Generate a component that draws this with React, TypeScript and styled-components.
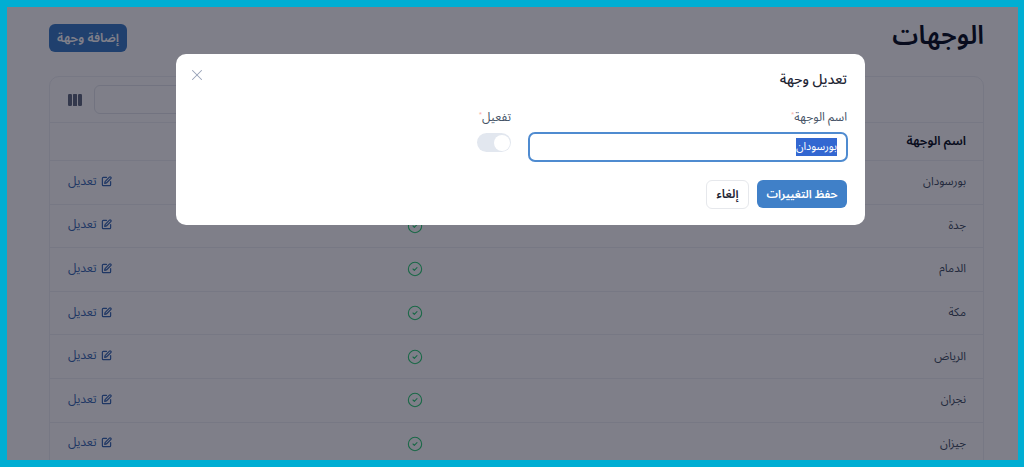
import React from "react";
import styled, { createGlobalStyle } from "styled-components";
import { X, SquarePen, CircleCheck } from "lucide-react";

const FONT = `"Noto Sans Arabic", "DejaVu Sans", "Noto Sans", sans-serif`;

const Global = createGlobalStyle`
  html, body { margin: 0; padding: 0; height: 100%; }
  body { font-family: ${FONT}; background: #fff; }
  * { box-sizing: border-box; }
`;

const Frame = styled.div`
  position: relative;
  width: 1024px;
  height: 467px;
  border: solid #00aed3;
  border-width: 7px 6px 7px 7px;
  overflow: hidden;
  background: #fff;
`;

const Page = styled.main`
  display: flex;
  flex-direction: column;
  padding: 17px 34px 0 42px;
`;

const PageHeader = styled.header`
  display: flex;
  justify-content: space-between;
  align-items: flex-start;
  height: 52px;
`;

const Title = styled.h1`
  margin: 0;
  font-size: 26px;
  line-height: 24px;
  font-weight: 600;
  color: #101828;
`;

const AddButton = styled.button`
  width: 78px;
  height: 28px;
  padding: 0;
  border: 0;
  border-radius: 6px;
  background: #4080c8;
  color: #fff;
  font: 600 12.5px ${FONT};
`;

const Card = styled.section`
  border: 1px solid #eef0f4;
  border-radius: 10px 10px 0 0;
`;

const Toolbar = styled.div`
  display: flex;
  justify-content: flex-end;
  align-items: center;
  gap: 12px;
  height: 46px;
  padding-left: 18px;
  border-bottom: 1px solid #eef0f4;
`;

const Search = styled.div`
  width: 260px;
  height: 29px;
  border: 1px solid #e4e7ec;
  border-radius: 6px;
`;

const Row = styled.div<{ $head?: boolean }>`
  display: grid;
  grid-template-columns: 467px 202px 1fr;
  align-items: center;
  height: ${(p) => (p.$head ? "38px" : "43.6px")};
  border-bottom: 1px solid #eef0f4;
  font-size: ${(p) => (p.$head ? "12.5px" : "11.5px")};
  font-weight: ${(p) => (p.$head ? 600 : 400)};
  color: ${(p) => (p.$head ? "#101828" : "#475467")};
`;

const NameCell = styled.div`
  padding: 0 17px 2px 0;
`;

const StatusCell = styled.div`
  display: flex;
  justify-content: center;
  color: #34d07a;
`;

const EditCell = styled.div`
  display: flex;
  justify-content: flex-end;
  padding: 0 0 2px 18px;
`;

const EditLink = styled.a`
  display: inline-flex;
  align-items: center;
  gap: 4px;
  color: #3f6fb5;
  font-size: 12px;
`;

const Overlay = styled.div`
  position: absolute;
  inset: 0;
  display: flex;
  justify-content: flex-start;
  align-items: flex-start;
  padding: 47px 153px 0 0;
  background: rgba(0, 0, 20, 0.5);
`;

const Modal = styled.div`
  position: relative;
  width: 689px;
  height: 171px;
  padding: 17px 18px 0 18px;
  border-radius: 10px;
  background: #fff;
`;

const CloseButton = styled.button`
  position: absolute;
  top: 12px;
  left: 12px;
  display: flex;
  width: 18px;
  height: 18px;
  padding: 0;
  border: 0;
  background: none;
  color: #98a2b8;
`;

const ModalTitle = styled.h2`
  margin: 0 0 22px;
  font-size: 14px;
  line-height: 18px;
  font-weight: 500;
  color: #1d2433;
`;

const Fields = styled.div`
  display: flex;
  gap: 17px;
  margin-bottom: 18px;
`;

const Field = styled.div<{ $w: number }>`
  display: flex;
  flex-direction: column;
  gap: 7px;
  width: ${(p) => p.$w}px;
`;

const Label = styled.label`
  white-space: nowrap;
  font-size: 12px;
  line-height: 14px;
  color: #475467;
  sup { color: #f9a8a0; font-size: 6px; line-height: 0; }
`;

const NameInput = styled.div`
  display: flex;
  align-items: center;
  height: 30px;
  margin-right: -1px;
  padding: 0 9px;
  border: 2px solid #4f8bd0;
  border-radius: 7px;
  font-size: 11px;
  color: #344054;
`;

const Selected = styled.span`
  display: inline-block;
  line-height: 18px;
  background: #3367d1;
  color: #fff;
`;

const Switch = styled.div`
  display: flex;
  align-items: center;
  justify-content: flex-start;
  width: 34px;
  height: 19px;
  margin-top: 1px;
  padding: 0 1px;
  border-radius: 10px;
  background: #e2e7ef;
  &::before {
    content: "";
    width: 16px;
    height: 16px;
    border-radius: 50%;
    background: #fff;
  }
`;

const Actions = styled.div`
  display: flex;
  gap: 8px;
`;

const SaveButton = styled.button`
  width: 90px;
  height: 28px;
  padding: 0;
  border: 0;
  border-radius: 6px;
  background: #4080c8;
  color: #fff;
  font: 600 11.5px ${FONT};
`;

const CancelButton = styled.button`
  width: 43px;
  height: 29px;
  padding: 0;
  border: 1px solid #e6e8ec;
  border-radius: 6px;
  background: #fff;
  color: #1d2433;
  font: 600 12px ${FONT};
`;

const ColumnsIcon = () => (
  <svg width="14" height="12" viewBox="0 0 14 12" fill="#667085" aria-hidden>
    <rect x="0" y="0" width="4" height="12" rx="1.2" />
    <rect x="5" y="0" width="4" height="12" rx="0.5" />
    <rect x="10" y="0" width="4" height="12" rx="1.2" />
  </svg>
);

const names = ["بورسودان", "جدة", "الدمام", "مكة", "الرياض", "نجران", "جيزان"];

export default function App() {
  return (
    <div dir="rtl">
      <Global />
      <Frame>
        <Page>
          <PageHeader>
            <Title>الوجهات</Title>
            <AddButton>إضافة وجهة</AddButton>
          </PageHeader>
          <Card>
            <Toolbar>
              <Search />
              <ColumnsIcon />
            </Toolbar>
            <Row $head>
              <NameCell>اسم الوجهة</NameCell>
            </Row>
            {names.map((n) => (
              <Row key={n}>
                <NameCell>{n}</NameCell>
                <StatusCell>
                  <CircleCheck size={16} strokeWidth={1.6} />
                </StatusCell>
                <EditCell>
                  <EditLink>
                    <SquarePen size={11} strokeWidth={2.6} />
                    تعديل
                  </EditLink>
                </EditCell>
              </Row>
            ))}
          </Card>
        </Page>
        <Overlay>
          <Modal>
            <CloseButton aria-label="إغلاق">
              <X size={18} strokeWidth={1.4} />
            </CloseButton>
            <ModalTitle>تعديل وجهة</ModalTitle>
            <Fields>
              <Field $w={319}>
                <Label>
                  اسم الوجهة<sup>*</sup>
                </Label>
                <NameInput>
                  <Selected>بورسودان</Selected>
                </NameInput>
              </Field>
              <Field $w={34}>
                <Label>
                  تفعيل<sup>*</sup>
                </Label>
                <Switch />
              </Field>
            </Fields>
            <Actions>
              <SaveButton>حفظ التغييرات</SaveButton>
              <CancelButton>إلغاء</CancelButton>
            </Actions>
          </Modal>
        </Overlay>
      </Frame>
    </div>
  );
}
